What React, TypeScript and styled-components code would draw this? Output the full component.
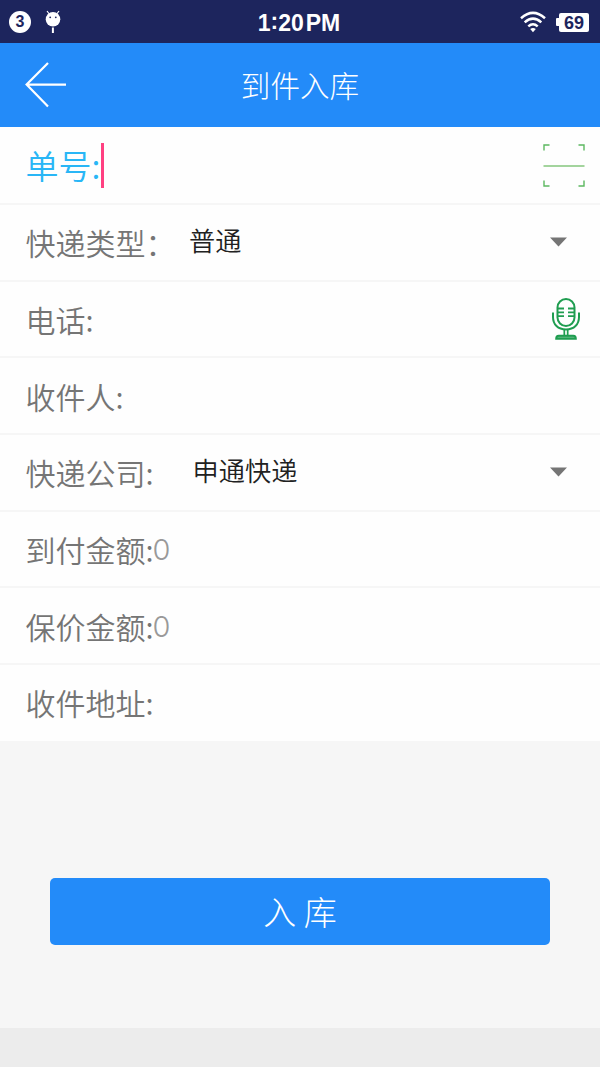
import React from "react";
import styled, { createGlobalStyle } from "styled-components";

const GlobalStyle = createGlobalStyle`
  * { box-sizing: border-box; }
  body {
    margin: 0;
    background: #f6f6f6;
    font-family: "Noto Sans CJK SC", sans-serif;
  }
`;

const Screen = styled.div`
  display: flex;
  flex-direction: column;
  width: 600px;
  height: 1067px;
  background: #f6f6f6;
  overflow: hidden;
`;

const StatusBar = styled.header`
  display: grid;
  grid-template-columns: 1fr auto 1fr;
  align-items: center;
  height: 43px;
  flex: none;
  padding: 0 11px 0 9px;
  background: #1d255d;
  color: #fff;
  font-family: "Liberation Sans", sans-serif;
  font-weight: 700;
`;

const StatusGroup = styled.div<{ $end?: boolean }>`
  display: flex;
  align-items: center;
  justify-content: ${(p) => (p.$end ? "flex-end" : "flex-start")};
  gap: ${(p) => (p.$end ? "10px" : "14px")};
`;

const CountBadge = styled.span`
  display: flex;
  align-items: center;
  justify-content: center;
  width: 22px;
  height: 22px;
  border-radius: 50%;
  background: #fff;
  color: #1d255d;
  font-size: 16px;
  line-height: 22px;
`;

const Clock = styled.time`
  display: flex;
  font-size: 23px;
  line-height: 42px;
  padding-top: 2px;
`;

const ClockColon = styled.span`
  padding-bottom: 3px;
  line-height: 38px;
`;

const Meridiem = styled.span`
  margin-left: 2px;
`;

const Battery = styled.span`
  display: flex;
  align-items: center;
  &::before {
    content: "";
    width: 3px;
    height: 8px;
    background: #fff;
    border-radius: 1px 0 0 1px;
  }
`;

const BatteryLevel = styled.span`
  width: 30px;
  height: 19px;
  border-radius: 2px;
  background: #fff;
  color: #1d255d;
  font-size: 18px;
  line-height: 20px;
  text-align: center;
`;

const TitleBar = styled.div`
  display: grid;
  grid-template-columns: 1fr auto 1fr;
  align-items: center;
  height: 83.5px;
  flex: none;
  padding: 0 24px;
  background: #238bf9;
`;

const BackButton = styled.button`
  display: flex;
  justify-self: start;
  padding: 0;
  border: 0;
  background: none;
`;

const Title = styled.h1`
  margin: 0;
  color: #fff;
  font-size: 29.6px;
  font-weight: 300;
  line-height: 40px;
`;

const Form = styled.main`
  flex: none;
  background: #fefefe;
`;

const Row = styled.div<{ $height?: number; $right: number }>`
  display: flex;
  align-items: center;
  height: ${(p) => p.$height ?? 76.65}px;
  padding: 0 ${(p) => p.$right}px 0 25.5px;
  border-bottom: 2px solid #f6f6f6;
  &:last-child { border-bottom-color: #fefefe; }
`;

const Label = styled.label<{ $active?: boolean }>`
  color: ${(p) => (p.$active ? "#29b6f6" : "#757575")};
  font-size: ${(p) => (p.$active ? 33 : 30)}px;
  font-weight: 350;
  line-height: 44px;
  white-space: nowrap;
`;

const Caret = styled.span`
  width: 3px;
  height: 45px;
  margin: 2px 0 0 0.5px;
  background: #ff4081;
`;

const Amount = styled.span`
  margin-left: -1px;
  padding-top: 2px;
  color: #999;
  font-family: Inter, sans-serif;
  font-size: 29px;
  font-weight: 300;
  line-height: 44px;
`;

const Selected = styled.span<{ $gap: number }>`
  margin-left: ${(p) => p.$gap}px;
  padding-bottom: 5px;
  color: #212121;
  font-size: 26.2px;
  font-weight: 350;
  line-height: 38px;
`;

const RowIcon = styled.span<{ $lift?: number }>`
  display: flex;
  margin-left: auto;
  padding-bottom: ${(p) => p.$lift ?? 0}px;
`;

const Actions = styled.section`
  flex: 1;
  padding: 136.8px 50px 0;
`;

const SubmitButton = styled.button`
  display: block;
  width: 100%;
  height: 66.5px;
  padding: 0 0 2px;
  border: 0;
  border-radius: 5px;
  background: #238bf9;
  color: #fff;
  font-family: inherit;
  font-size: 33px;
  font-weight: 300;
  line-height: 64px;
`;

const Footer = styled.footer`
  height: 39px;
  flex: none;
  background: #ececec;
`;

const RobotIcon = () => (
  <svg width="16" height="24" viewBox="0 0 16 24" fill="#fff">
    <path d="M2 1l3 4M14 1l-3 4" stroke="#fff" strokeWidth="1.2" />
    <circle cx="8" cy="9.3" r="7.3" />
    <circle cx="5.2" cy="7.3" r="0.9" fill="#1d255d" />
    <circle cx="10.8" cy="7.3" r="0.9" fill="#1d255d" />
    <path d="M6.9 17.5h2v5.5h-2z" />
  </svg>
);

const WifiIcon = () => (
  <svg width="26" height="22" viewBox="0 0 26 22" fill="none" stroke="#fff" strokeWidth="2.5">
    <path d="M1 7.2Q13-3.5 25 7.2M4.7 11.4Q13 3.8 21.3 11.4M8.3 15.4Q13 11.2 17.7 15.4" />
    <path d="M10.2 18Q13 15.8 15.8 18L13 21.2z" fill="#fff" stroke="none" />
  </svg>
);

const BackIcon = () => (
  <svg width="43" height="46" viewBox="0 0 43 46" fill="none" stroke="#fff" strokeWidth="2.2">
    <path d="M24 1L2.6 22.6L24 44.5M2.6 22.6H42" />
  </svg>
);

const ScanIcon = () => (
  <svg width="42" height="44" viewBox="0 0 42 44" fill="none" stroke="#5cb860" strokeWidth="1.4">
    <path d="M1 7.5V2h5.5M35.5 2H41V7.5M1 37.5V43h5.5M35.5 43H41V37.5" />
    <path d="M0.5 23h41" stroke="#85c67c" strokeWidth="1.7" />
  </svg>
);

const DropIcon = () => (
  <svg width="17" height="10" viewBox="0 0 17 10">
    <path d="M0 0.5h17L8.5 9.5z" fill="#757575" />
  </svg>
);

const MicIcon = () => (
  <svg width="28" height="42" viewBox="0 0 28 42" fill="none" stroke="#1f9d50" strokeWidth="2">
    <rect x="5.5" y="1" width="17" height="27" rx="8.5" />
    <path d="M1 14.5v4.5c0 7.5 5 12.5 13 12.5s13-5 13-12.5v-4.5" />
    <path d="M6 10.5h6M6 14.3h6M6 18.1h6M16 10.5h6M16 14.3h6M16 18.1h6" strokeWidth="1.8" />
    <path d="M12.3 31.5v6M15.7 31.5v6" strokeWidth="1.7" />
    <path d="M4.2 40.8c0-2.3 1-3 2.5-3h14.6c1.5 0 2.5.7 2.5 3z" fill="#63bb84" />
  </svg>
);

export default function App() {
  return (
    <>
      <GlobalStyle />
      <Screen>
        <StatusBar>
          <StatusGroup>
            <CountBadge>3</CountBadge>
            <RobotIcon />
          </StatusGroup>
          <Clock>
            1<ClockColon>:</ClockColon>20<Meridiem>PM</Meridiem>
          </Clock>
          <StatusGroup $end>
            <WifiIcon />
            <Battery>
              <BatteryLevel>69</BatteryLevel>
            </Battery>
          </StatusGroup>
        </StatusBar>
        <TitleBar>
          <BackButton aria-label="返回">
            <BackIcon />
          </BackButton>
          <Title>到件入库</Title>
        </TitleBar>
        <Form>
          <Row $height={78.5} $right={15}>
            <Label $active>单号:</Label>
            <Caret />
            <RowIcon><ScanIcon /></RowIcon>
          </Row>
          <Row $right={33}>
            <Label>快递类型：</Label>
            <Selected $gap={13.5}>普通</Selected>
            <RowIcon $lift={1}><DropIcon /></RowIcon>
          </Row>
          <Row $right={20}>
            <Label>电话:</Label>
            <RowIcon><MicIcon /></RowIcon>
          </Row>
          <Row $right={20}>
            <Label>收件人:</Label>
          </Row>
          <Row $right={33}>
            <Label>快递公司:</Label>
            <Selected $gap={39}>申通快递</Selected>
            <RowIcon $lift={1}><DropIcon /></RowIcon>
          </Row>
          <Row $right={20}>
            <Label>到付金额:</Label>
            <Amount>0</Amount>
          </Row>
          <Row $right={20}>
            <Label>保价金额:</Label>
            <Amount>0</Amount>
          </Row>
          <Row $right={20}>
            <Label>收件地址:</Label>
          </Row>
        </Form>
        <Actions>
          <SubmitButton>入 库</SubmitButton>
        </Actions>
        <Footer />
      </Screen>
    </>
  );
}
